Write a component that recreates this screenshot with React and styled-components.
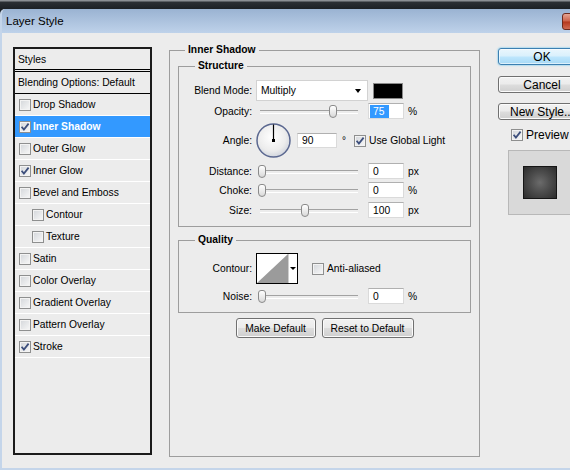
import React from "react";
import styled, { createGlobalStyle } from "styled-components";

const FONT = "'Liberation Sans', Arial, sans-serif";

const Global = createGlobalStyle`
  html, body { margin: 0; padding: 0; background: #1f2328; }
  body { width: 570px; height: 470px; overflow: hidden; }
  * { box-sizing: border-box; }
`;

const Page = styled.div`
  width: 570px;
  height: 470px;
  overflow: hidden;
  display: flex;
  flex-direction: column;
  font-family: ${FONT};
  font-size: 10.3px;
  color: #000;
  background: #1f2328;
`;

const TopStrip = styled.div`
  height: 9px;
  flex-shrink: 0;
  background: linear-gradient(#8a8e93 0, #8a8e93 1px, #2b2f34 2px, #1c2025 100%);
`;

const Window = styled.div`
  flex: 1;
  display: flex;
  flex-direction: column;
  background: #ececec;
  border-left: 2px solid #c4d5ea;
  border-bottom: 2px solid #c4d5ea;
  border-top-left-radius: 5px;
  overflow: hidden;
`;

const TitleBar = styled.div`
  height: 24px;
  flex-shrink: 0;
  display: flex;
  align-items: center;
  padding-left: 4px;
  background: linear-gradient(#9ab3d2, #bed2ea);
`;

const Title = styled.span`
  font-size: 11.5px;
  color: #000;
`;

const CloseButton = styled.div`
  margin-left: auto;
  margin-right: -38px;
  align-self: flex-start;
  margin-top: 4px;
  width: 46px;
  height: 17px;
  border: 1px solid #6d2a1e;
  border-radius: 3px;
  background: linear-gradient(#e6a593, #cc6149 48%, #b4371d 52%, #d06a52);
`;

const Body = styled.div`
  flex: 1;
  display: flex;
  align-items: flex-start;
  padding-left: 11px;
`;

const StyleList = styled.div`
  flex-shrink: 0;
  margin-top: 14px;
  width: 139px;
  height: 408px;
  border: 2px solid #1b1b1b;
  display: flex;
  flex-direction: column;
`;

const ListHeader = styled.div`
  height: 23px;
  flex-shrink: 0;
  display: flex;
  align-items: center;
  padding-left: 3px;
  border-bottom: 3px double #000;
`;

const ListRow = styled.div`
  height: 22px;
  flex-shrink: 0;
  display: flex;
  align-items: center;
  gap: 2px;
  padding-left: ${(p) => (p.$plain ? 3 : 4 + (p.$indent ? 13 : 0))}px;
  border-bottom: 1px solid ${(p) => (p.$dark ? "#000" : "#fff")};
  background: ${(p) => (p.$selected ? "#3399ff" : "transparent")};
  color: ${(p) => (p.$selected ? "#fff" : "#000")};
  font-weight: ${(p) => (p.$selected ? "bold" : "normal")};
`;

const BoxOuter = styled.span`
  width: 12px;
  height: 12px;
  flex-shrink: 0;
  display: inline-flex;
  align-items: center;
  justify-content: center;
  border: 1px solid #8e8f8f;
  background: linear-gradient(135deg, #d3d6da, #f8f8f8);
  box-shadow: inset 0 0 0 1px #f3f3f3;
`;

const Check = ({ checked }) => (
  <BoxOuter>
    {checked && (
      <svg width="10" height="10" viewBox="0 0 10 10">
        <path d="M1.6 4.8 L3.9 7.6 L8.6 1.6" fill="none" stroke="#3d4f7c" strokeWidth="1.8" />
      </svg>
    )}
  </BoxOuter>
);

const Group = styled.fieldset`
  margin: ${(p) => p.$margin};
  padding: 0;
  min-width: 0;
  flex-shrink: 0;
  width: ${(p) => p.$width || "auto"};
  height: ${(p) => p.$height || "auto"};
  border: 1px solid #9d9d9d;
`;

const Legend = styled.legend`
  margin-left: ${(p) => p.$offset}px;
  padding: 0 3px;
  font-weight: bold;
  font-size: 10.3px;
  line-height: 12px;
`;

const GroupBody = styled.div`
  padding: ${(p) => p.$pad};
  display: flex;
  flex-direction: column;
`;

const Row = styled.div`
  display: flex;
  align-items: center;
  height: ${(p) => p.$h}px;
  margin-top: ${(p) => p.$mt || 0}px;
`;

const Label = styled.span`
  width: 73px;
  margin-right: 4px;
  text-align: right;
  flex-shrink: 0;
`;

const Select = styled.div`
  width: 112px;
  height: 21px;
  display: flex;
  align-items: center;
  padding: 0 6px 0 4px;
  background: #fff;
  border: 1px solid #d2d2d2;
  &::after {
    content: "";
    margin-left: auto;
    border-left: 3.5px solid transparent;
    border-right: 3.5px solid transparent;
    border-top: 4px solid #000;
  }
`;

const Swatch = styled.div`
  width: 30px;
  height: 16px;
  margin-left: 5px;
  background: #000;
  border: 1px solid #8a8a8a;
`;

const Slider = styled.div`
  position: relative;
  width: 106px;
  height: 16px;
  flex-shrink: 0;
  &::before {
    content: "";
    position: absolute;
    left: 4px;
    right: 4px;
    top: 7px;
    height: 2px;
    border-top: 1px solid #a2a2a2;
    border-bottom: 1px solid #fff;
  }
`;

const Thumb = styled.div`
  position: absolute;
  top: 2px;
  width: 8px;
  height: 13px;
  border: 1px solid #8a8a8a;
  border-radius: 3px 3px 4px 4px;
  background: linear-gradient(#ffffff, #d9d9d9);
`;

const Field = styled.div`
  width: ${(p) => p.$w || 36}px;
  height: ${(p) => p.$fh || 16}px;
  margin-left: ${(p) => p.$ml ?? 6}px;
  display: flex;
  align-items: center;
  padding-left: 4px;
  background: #fff;
  border: 1px solid #dadada;
  border-top-color: #b0b0b0;
  flex-shrink: 0;
`;

const Selection = styled.span`
  margin-left: -3px;
  padding: 0 5px 0 3px;
  line-height: 13px;
  background: #3399ff;
  color: #fff;
`;

const Unit = styled.span`
  margin-left: 4px;
`;

const Degree = styled.span`
  margin-left: 5px;
  align-self: flex-start;
  margin-top: 13px;
  font-size: 10px;
  line-height: 10px;
`;

const CheckLabel = styled.label`
  display: flex;
  align-items: center;
  gap: 3px;
  margin-left: ${(p) => p.$ml}px;
`;

const ContourBox = styled.div`
  width: 42px;
  height: 31px;
  display: flex;
  border: 1px solid #000;
  background: #fff;
  flex-shrink: 0;
`;

const ContourArrow = styled.div`
  flex: 1;
  display: flex;
  align-items: center;
  justify-content: center;
  border-left: 1px solid #cfcfcf;
  &::after {
    content: "";
    border-left: 3px solid transparent;
    border-right: 3px solid transparent;
    border-top: 3px solid #000;
  }
`;

const ButtonsRow = styled.div`
  display: flex;
  justify-content: center;
  gap: 6px;
  margin-top: 5px;
`;

const Button = styled.div`
  width: ${(p) => p.$w}px;
  height: ${(p) => p.$h || 20}px;
  margin-top: ${(p) => p.$mt || 0}px;
  display: flex;
  align-items: center;
  justify-content: center;
  white-space: nowrap;
  font-size: ${(p) => p.$fs || 10.3}px;
  border: 1px solid ${(p) => (p.$primary ? "#3c7fb1" : "#707070")};
  border-radius: 3px;
  background: ${(p) =>
    p.$primary
      ? "linear-gradient(#eaf6fd, #d9f0fc 48%, #bee6fd 52%, #a7d9f5)"
      : "linear-gradient(#f2f2f2, #ebebeb 48%, #dddddd 52%, #cfcfcf)"};
  box-shadow: ${(p) => (p.$primary ? "0 0 2px #38b6f0, inset 0 0 0 1px #ffffff99" : "inset 0 0 0 1px #fbfbfb")};
  flex-shrink: 0;
`;

const SideColumn = styled.div`
  flex-shrink: 0;
  width: 88px;
  margin-left: 18px;
  margin-top: 15px;
  display: flex;
  flex-direction: column;
`;

const PreviewCheck = styled.label`
  display: flex;
  align-items: center;
  gap: 3px;
  margin: 9px 0 0 13px;
  font-size: 12px;
  height: 12px;
`;

const PreviewBox = styled.div`
  margin: 9px 0 0 10px;
  width: 64px;
  height: 65px;
  display: flex;
  align-items: center;
  justify-content: center;
  background: #d9d9d9;
  border: 1px solid #b8b8b8;
`;

const PreviewSquare = styled.div`
  width: 34px;
  height: 33px;
  border: 1px solid #151515;
  background: radial-gradient(circle, #6b6b6b 0%, #4d4d4d 45%, #2c2c2c 100%);
`;

const Dial = () => (
  <svg width="35" height="35" viewBox="0 0 35 35" style={{ flexShrink: 0 }}>
    <defs>
      <radialGradient id="dialFill" cx="45%" cy="40%" r="60%">
        <stop offset="0%" stopColor="#ffffff" />
        <stop offset="70%" stopColor="#ececec" />
        <stop offset="100%" stopColor="#d2d6de" />
      </radialGradient>
    </defs>
    <circle cx="17.5" cy="17.5" r="16.5" fill="url(#dialFill)" stroke="#5b6890" strokeWidth="1.5" />
    <line x1="17.5" y1="17.5" x2="17.5" y2="1.5" stroke="#000" strokeWidth="1.2" />
    <rect x="16" y="16" width="3" height="3" fill="#000" />
  </svg>
);

const SliderRow = ({ label, pos, value, unit, mt, selected }) => (
  <Row $h={16} $mt={mt}>
    <Label>{label}</Label>
    <Slider>
      <Thumb style={{ left: pos }} />
    </Slider>
    <Field>{selected ? <Selection>{value}</Selection> : value}</Field>
    <Unit>{unit}</Unit>
  </Row>
);

const styles = [
  { name: "Drop Shadow" },
  { name: "Inner Shadow", checked: true, selected: true },
  { name: "Outer Glow" },
  { name: "Inner Glow", checked: true },
  { name: "Bevel and Emboss" },
  { name: "Contour", indent: true },
  { name: "Texture", indent: true },
  { name: "Satin" },
  { name: "Color Overlay" },
  { name: "Gradient Overlay" },
  { name: "Pattern Overlay" },
  { name: "Stroke", checked: true },
];

export default function App() {
  return (
    <Page>
      <Global />
      <TopStrip />
      <Window>
        <TitleBar>
          <Title>Layer Style</Title>
          <CloseButton />
        </TitleBar>
        <Body>
          <StyleList>
            <ListHeader>Styles</ListHeader>
            <ListRow $dark $plain>Blending Options: Default</ListRow>
            {styles.map((s) => (
              <ListRow key={s.name} $selected={s.selected} $indent={s.indent}>
                <Check checked={s.checked} />
                <span>{s.name}</span>
              </ListRow>
            ))}
          </StyleList>

          <Group $margin="11px 0 0 17px" $width="311px" $height="413px">
            <Legend $offset={15}>Inner Shadow</Legend>
            <GroupBody $pad="0 8px">
              <Group $margin="4px 0 0 0">
                <Legend $offset={16}>Structure</Legend>
                <GroupBody $pad="8px 0 8px 0">
                  <Row $h={21}>
                    <Label>Blend Mode:</Label>
                    <Select>Multiply</Select>
                    <Swatch />
                  </Row>
                  <SliderRow label="Opacity:" pos={73} value="75" unit="%" mt={2} selected />
                  <Row $h={35} $mt={4}>
                    <Label>Angle:</Label>
                    <Dial />
                    <Field $w={40} $fh={15} $ml={6}>90</Field>
                    <Degree>°</Degree>
                    <CheckLabel $ml={8}>
                      <Check checked />
                      <span>Use Global Light</span>
                    </CheckLabel>
                  </Row>
                  <SliderRow label="Distance:" pos={2} value="0" unit="px" mt={5} />
                  <SliderRow label="Choke:" pos={2} value="0" unit="%" mt={3} />
                  <SliderRow label="Size:" pos={45} value="100" unit="px" mt={4} />
                </GroupBody>
              </Group>

              <Group $margin="7px 0 0 0">
                <Legend $offset={16}>Quality</Legend>
                <GroupBody $pad="7px 0 8px 0">
                  <Row $h={31}>
                    <Label>Contour:</Label>
                    <ContourBox>
                      <svg width="31" height="29" viewBox="0 0 31 29">
                        <polygon points="0,29 31,0 31,29" fill="#9b9b9b" />
                      </svg>
                      <ContourArrow />
                    </ContourBox>
                    <CheckLabel $ml={14}>
                      <Check />
                      <span>Anti-aliased</span>
                    </CheckLabel>
                  </Row>
                  <SliderRow label="Noise:" pos={2} value="0" unit="%" mt={4} />
                </GroupBody>
              </Group>

              <ButtonsRow>
                <Button $w={80}>Make Default</Button>
                <Button $w={92}>Reset to Default</Button>
              </ButtonsRow>
            </GroupBody>
          </Group>

          <SideColumn>
            <Button $w={88} $h={17} $fs={12} $primary>OK</Button>
            <Button $w={88} $h={17} $fs={12} $mt={11}>Cancel</Button>
            <Button $w={88} $h={17} $fs={12} $mt={10}>New Style...</Button>
            <PreviewCheck>
              <Check checked />
              <span>Preview</span>
            </PreviewCheck>
            <PreviewBox>
              <PreviewSquare />
            </PreviewBox>
          </SideColumn>
        </Body>
      </Window>
    </Page>
  );
}
